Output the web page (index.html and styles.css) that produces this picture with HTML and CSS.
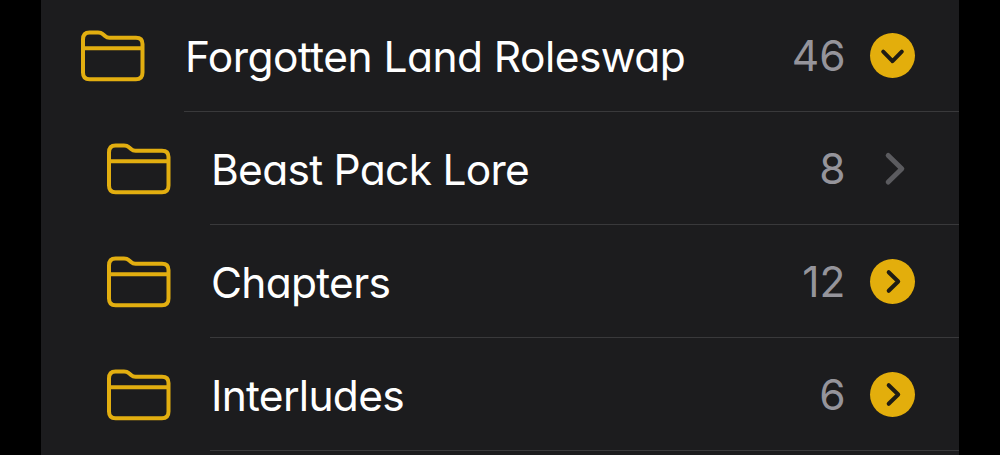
FILE: index.html
```html
<!DOCTYPE html>
<html lang="en">
<head>
  <meta charset="UTF-8">
  <meta name="viewport" content="width=device-width, initial-scale=1.0">
  <title>Folders</title>
  <link rel="stylesheet" href="styles.css">
</head>
<body>
  <!-- shared icons -->
  <svg class="icon-defs" width="0" height="0">
    <symbol id="folder" viewBox="0 0 64 53">
      <path d="M2 10.500V43.500Q2 50.300 8.500 50.300H55Q61.500 50.300 61.500 43.500V15Q61.500 8.700 55 8.700H28.500Q26 8.700 24 7L22 5.300Q20 3.500 17 3.500H8.500Q2 3.500 2 10.500ZM2 19.300H61.500"/>
    </symbol>
    <symbol id="chevron" viewBox="0 0 45 45">
      <path d="M18.700 13.200L28.200 22.500L18.700 31.800"/>
    </symbol>
  </svg>

  <div class="folder-list">
    <div class="row">
      <svg class="folder-icon"><use href="#folder"/></svg>
      <div class="row-body">
        <span class="name name-root">Forgotten Land Roleswap</span>
        <span class="count">46</span>
        <svg class="toggle toggle-open"><use href="#chevron"/></svg>
      </div>
    </div>
    <div class="row child">
      <svg class="folder-icon"><use href="#folder"/></svg>
      <div class="row-body">
        <span class="name">Beast Pack Lore</span>
        <span class="count">8</span>
        <svg class="toggle-plain" viewBox="0 0 45 45"><path d="M18.200 9.500L31.800 22.700L18.200 36"/></svg>
      </div>
    </div>
    <div class="row child">
      <svg class="folder-icon"><use href="#folder"/></svg>
      <div class="row-body">
        <span class="name">Chapters</span>
        <span class="count">12</span>
        <svg class="toggle"><use href="#chevron"/></svg>
      </div>
    </div>
    <div class="row child">
      <svg class="folder-icon"><use href="#folder"/></svg>
      <div class="row-body">
        <span class="name">Interludes</span>
        <span class="count">6</span>
        <svg class="toggle"><use href="#chevron"/></svg>
      </div>
    </div>
  </div>
</body>
</html>
```
FILE: styles.css
```css
body {
  margin: 0;
  background: #000;
  font-family: Inter, "Liberation Sans", sans-serif;
  font-size: 42.5px;
  font-feature-settings: "cv11";
  color: #fff;
  overflow: hidden;
}
.icon-defs {
  display: none;
}
.folder-list {
  width: 918px;
  height: 456px;
  margin: -1px 0 0 41px;
  background: #1c1c1e;
}
.row {
  display: flex;
  align-items: center;
  height: 113px;
  padding-left: 40px;
}
.child {
  padding-left: 66px;
}
.folder-icon {
  width: 64px;
  height: 53px;
  margin-right: 39px;
  fill: none;
  stroke: #e2ae10;
  stroke-width: 4;
  stroke-linejoin: round;
}
.row-body {
  flex: 1;
  display: flex;
  align-items: center;
  height: 100%;
  box-sizing: border-box;
  padding: 1px 44px 0 0;
  border-bottom: 1px solid #39393b;
}
.name {
  flex: 1;
  padding: 2px 0 0 1px;
  letter-spacing: -0.72px;
  white-space: nowrap;
}
.name-root {
  letter-spacing: -0.55px;
}
.count {
  color: #95949b;
}
.toggle,
.toggle-plain {
  width: 45px;
  height: 45px;
  margin-left: 24.5px;
  fill: none;
  stroke-linecap: round;
  stroke-linejoin: round;
}
.toggle {
  border-radius: 50%;
  background: #e3ae0c;
  stroke: #1f1c14;
  stroke-width: 4;
}
.toggle-open {
  transform: rotate(90deg);
}
.toggle-plain {
  stroke: #5b5b5f;
  stroke-width: 5;
}
```
